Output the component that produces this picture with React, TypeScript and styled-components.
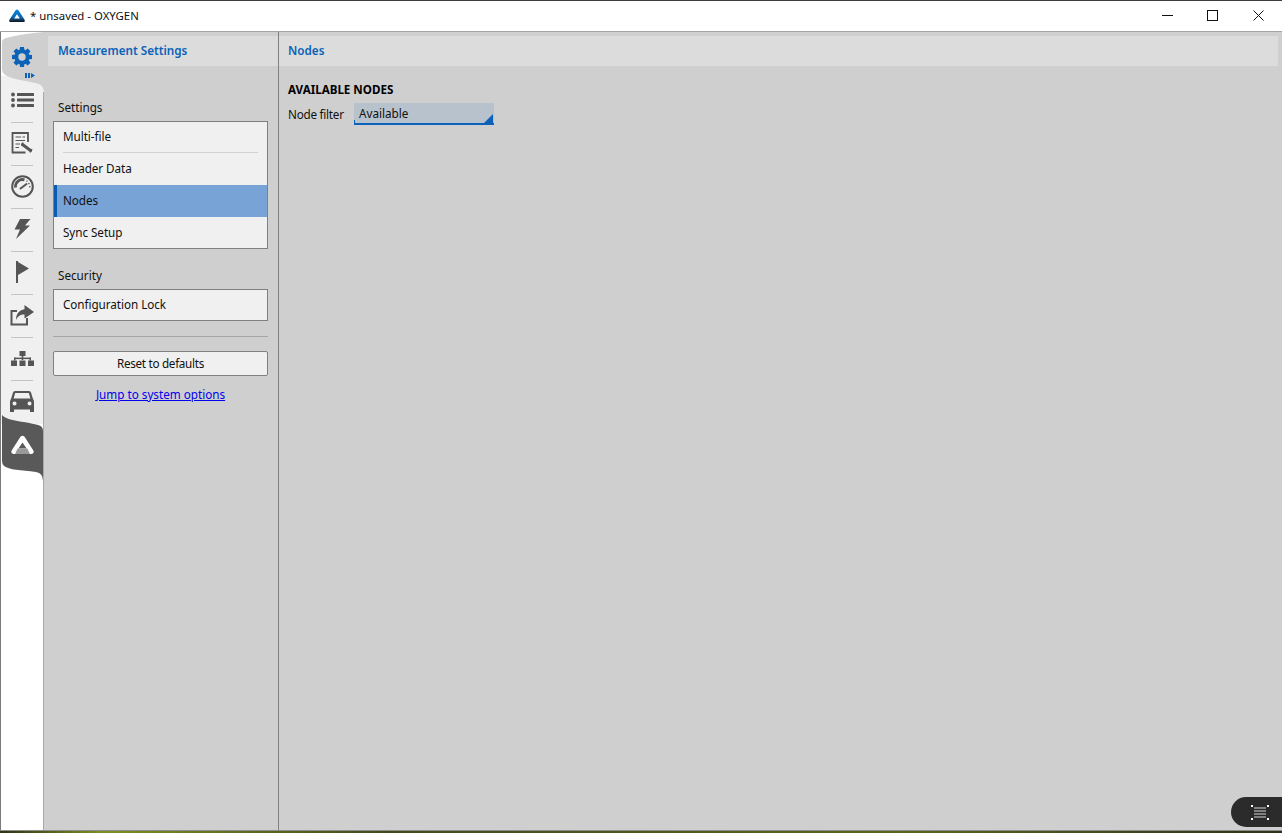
import React from "react";
import styled, { createGlobalStyle } from "styled-components";

const Global = createGlobalStyle`
  html, body { margin: 0; padding: 0; height: 100%; }
  body {
    background: linear-gradient(90deg, #2c3318 0%, #7d8f22 8%, #3f4a1c 30%, #59661f 70%, #2c3318 100%);
    font-family: "Noto Sans", "Open Sans", sans-serif;
    font-size: 11.7px;
    color: #111;
    overflow: hidden;
  }
  * { box-sizing: border-box; }
`;

const Window = styled.div`
  width: 1282px;
  height: 831px;
  display: flex;
  flex-direction: column;
  background: #fff;
  border-top: 1px solid #3c3c3c;
  border-bottom: 1px solid #8c8c8c;
  position: relative;
`;

const TitleBar = styled.header`
  height: 31px;
  flex: none;
  display: flex;
  align-items: center;
  padding: 0 1px 1px 9px;
  background: #fff;
  border-bottom: 1px solid #a4a4a4;
`;

const TitleText = styled.span`
  margin-left: 5px;
  font-size: 11.4px;
  color: #111;
`;

const WinControls = styled.div`
  margin-left: auto;
  display: flex;
`;

const WinButton = styled.div`
  width: 45.5px;
  height: 30px;
  display: flex;
  align-items: center;
  justify-content: center;
`;

const Body = styled.div`
  flex: 1;
  display: flex;
  min-height: 0;
  border-left: 1px solid #7a7a7a;
`;

const Rail = styled.nav`
  width: 42px;
  flex: none;
  display: flex;
  flex-direction: column;
  background: #fff;
  position: relative;
  z-index: 1;
`;

const ActiveTab = styled.div`
  height: 48px;
  flex: none;
  position: relative;
  display: flex;
  justify-content: center;
  padding-top: 15px;
  z-index: 1;
`;

const TabShape = styled.svg<{ $top: number }>`
  position: absolute;
  left: 0;
  top: ${(p) => p.$top}px;
  z-index: -1;
`;

const RailList = styled.div`
  display: flex;
  flex-direction: column;
  background: #f0f0f0;
`;

const RailItem = styled.div<{ $last?: boolean }>`
  height: 43px;
  display: flex;
  align-items: center;
  justify-content: center;
  padding-bottom: 3px;
  position: relative;
  &::after {
    content: "";
    display: ${(p) => (p.$last ? "none" : "block")};
    position: absolute;
    left: 10px;
    right: 10px;
    bottom: 0;
    height: 1px;
    background: #c4c4c4;
  }
`;

const LogoTab = styled.div`
  height: 56px;
  flex: none;
  position: relative;
  display: flex;
  justify-content: center;
  padding-top: 11px;
  z-index: 1;
`;

const RailRest = styled.div`
  flex: 1;
  background: #fff;
`;

const Main = styled.main`
  flex: 1;
  display: flex;
  background: #cfcfcf;
  border-left: 1px solid #a8a8a8;
`;

const SidePanel = styled.section`
  width: 235px;
  flex: none;
  border-right: 1px solid #808080;
  padding-top: 4px;
`;

const ContentPanel = styled.section`
  flex: 1;
  padding: 4px 4px 0 0;
`;

const PanelHeader = styled.div<{ $inset: number; $gutter: number }>`
  height: 30px;
  background: #dcdcdc;
  color: #0b62b8;
  font-weight: 600;
  line-height: 29px;
  padding-left: ${(p) => p.$inset}px;
  margin-left: ${(p) => p.$gutter}px;
`;

const SideBody = styled.div`
  padding: 33px 10px 0 9px;
`;

const GroupLabel = styled.div`
  line-height: 17px;
  padding-left: 5px;
  margin-bottom: 5px;
  color: #111;
`;

const Group = styled.div`
  border: 1px solid #808080;
  background: #f0f0f0;
  margin-bottom: 18px;
  display: flex;
  flex-direction: column;
`;

const GroupRow = styled.div<{ $active?: boolean; $rule?: boolean }>`
  height: 32px;
  line-height: 30px;
  padding-left: ${(p) => (p.$active ? 6 : 9)}px;
  background: ${(p) => (p.$active ? "#78a3d6" : "transparent")};
  border-left: ${(p) => (p.$active ? "3px solid #0b5cb0" : "none")};
  position: relative;
  color: #111;
  letter-spacing: -0.05px;
  &:first-child { height: 31px; line-height: 28px; }
  &:last-child { height: 31px; }
  &:only-child { height: 30px; line-height: 28px; }
  &::after {
    content: "";
    display: ${(p) => (p.$rule ? "block" : "none")};
    position: absolute;
    left: 9px;
    right: 9px;
    bottom: 0;
    height: 1px;
    background: #d2d2d2;
  }
`;

const Divider = styled.hr`
  border: 0;
  height: 1px;
  background: #a6a6a6;
  margin: -3px 0 14px;
`;

const ResetButton = styled.button`
  display: block;
  width: 100%;
  height: 25px;
  border: 1px solid #808080;
  border-radius: 2px;
  background: #f0f0f0;
  font: inherit;
  letter-spacing: -0.3px;
  color: #111;
  padding: 0 0 2px;
`;

const JumpLink = styled.a`
  display: block;
  margin-top: 10px;
  text-align: center;
  color: #0000ee;
  text-decoration: underline;
  line-height: 17px;
`;

const ContentBody = styled.div`
  padding: 15px 9px 0;
`;

const SectionTitle = styled.div`
  font-weight: 700;
  font-size: 11.6px;
  line-height: 17px;
  color: #000;
`;

const FilterRow = styled.div`
  display: flex;
  align-items: center;
  margin-top: 5px;
`;

const FilterLabel = styled.span`
  width: 66px;
  flex: none;
  letter-spacing: -0.25px;
`;

const Select = styled.div`
  width: 140px;
  height: 22px;
  background: #b8c2cd;
  border-bottom: 2px solid #0b62b8;
  padding-left: 5px;
  line-height: 21px;
  position: relative;
  color: #111;
  &::before {
    content: "";
    position: absolute;
    left: 0;
    bottom: 0;
    width: 1px;
    height: 3px;
    background: #0b62b8;
  }
  &::after {
    content: "";
    position: absolute;
    right: 1px;
    bottom: 0;
    border-style: solid;
    border-width: 0 0 9px 9px;
    border-color: transparent transparent #0b62b8 transparent;
  }
`;

const QueuePill = styled.div`
  position: absolute;
  right: 0;
  bottom: 3px;
  width: 51px;
  height: 30px;
  background: #2b2b2b;
  border-radius: 15px 0 0 15px;
  display: flex;
  align-items: center;
  justify-content: center;
  padding-left: 6px;
`;

const Logo = ({ size, light }: { size: number; light?: boolean }) => (
  <svg width={size} height={size * 0.86} viewBox="0 0 28 24">
    <defs>
      <linearGradient id="lg" x1="0" y1="0" x2="0" y2="1">
        <stop offset="0" stopColor="#0a86dc" />
        <stop offset="0.6" stopColor="#0a6ab8" />
        <stop offset="0.85" stopColor="#12324e" />
        <stop offset="1" stopColor="#111" />
      </linearGradient>
    </defs>
    <path
      fillRule="evenodd"
      fill={light ? "#fff" : "url(#lg)"}
      d="M11.5 2 Q14 0 16.5 2 L27 18.5 Q29 22.5 25 23 L3 23 Q-1 22.5 1 18.5 Z M14 9 L9 16.5 L19 16.5 Z"
    />
    {light && <path d="M8 16.5 H20 L23 23 H5 Z" fill="#9a9a9a" />}
  </svg>
);

const GearIcon = () => (
  <svg width="20" height="20" viewBox="0 0 20 20">
    <g fill="#0b62b8">
      {[0, 45, 90, 135, 180, 225, 270, 315].map((a) => (
        <path key={a} d="M8 0 H12 L12.6 4 H7.4 Z" transform={`rotate(${a} 10 10)`} />
      ))}
    </g>
    <circle cx="10" cy="10" r="5.6" fill="none" stroke="#0b62b8" strokeWidth="3.8" />
  </svg>
);

const ListIcon = () => (
  <svg width="23" height="16" viewBox="0 0 23 16" fill="#555">
    <circle cx="2" cy="2.5" r="1.9" />
    <circle cx="2" cy="8" r="1.9" />
    <circle cx="2" cy="13.5" r="1.9" />
    <rect x="6" y="1" width="17" height="3" rx="0.5" />
    <rect x="6" y="6.5" width="17" height="3" rx="0.5" />
    <rect x="6" y="12" width="17" height="3" rx="0.5" />
  </svg>
);

const ReportIcon = () => (
  <svg width="23" height="22" viewBox="0 0 23 22" fill="none" stroke="#555">
    <path d="M14.5 20.5 H1.5 V1 H17 V10" strokeWidth="1.8" />
    <path d="M4.5 5 H10 M11.5 5 H14 M4.5 8.5 H14 M4.5 12 H9 M4.5 15.5 H8" strokeWidth="1.2" />
    <path d="M11.5 12.5 L19.5 18.5" strokeWidth="3" strokeLinecap="round" />
    <path d="M10.5 13.5 L12 10.5 M21 17 L19 20.5" strokeWidth="1.4" />
  </svg>
);

const GaugeIcon = () => (
  <svg width="23" height="23" viewBox="0 0 23 23" fill="none" stroke="#555">
    <circle cx="11.5" cy="11.5" r="10.3" strokeWidth="2" />
    <path d="M4.6 12.5 A7 7 0 0 1 13.5 4.8" strokeWidth="2.8" />
    <path d="M15.6 5.8 L16.4 6.6 M17.6 8 L18.3 9.2 M18.7 11 L19 12.4" strokeWidth="1.4" />
    <path d="M9.5 13.5 L15.5 9" strokeWidth="2" strokeLinecap="round" />
  </svg>
);

const BoltIcon = () => (
  <svg width="17" height="20" viewBox="0 0 17 20" fill="#555">
    <path d="M6 0 H16.5 L11 6.5 H16 L2 20 L6 10.5 H0.5 Z" />
  </svg>
);

const FlagIcon = () => (
  <svg width="13" height="22" viewBox="0 0 13 22" fill="#555">
    <rect x="0" y="0" width="2" height="22" />
    <path d="M2 1 L13 7.5 L2 14 Z" />
  </svg>
);

const ShareIcon = () => (
  <svg width="24" height="21" viewBox="0 0 24 21">
    <path d="M7 6 H1.5 V19.5 H17 V13" fill="none" stroke="#555" strokeWidth="2" />
    <path fill="#555" d="M14.5 0 L24 7 L14.5 13.5 V9.5 C10 9.5 7.5 11.5 6 15 C6 9 9 5 14.5 4.2 Z" />
  </svg>
);

const TreeIcon = () => (
  <svg width="23" height="15" viewBox="0 0 23 15" fill="#555">
    <rect x="8.5" y="0" width="6" height="5" />
    <rect x="10.7" y="5" width="1.6" height="4" />
    <rect x="3" y="6.6" width="17" height="1.5" />
    <rect x="3" y="6.6" width="1.5" height="3" />
    <rect x="18.5" y="6.6" width="1.5" height="3" />
    <rect x="0" y="9.5" width="6" height="5.5" />
    <rect x="8.5" y="9.5" width="6" height="5.5" />
    <rect x="17" y="9.5" width="6" height="5.5" />
  </svg>
);

const CarIcon = () => (
  <svg width="24" height="21" viewBox="0 0 24 21">
    <path
      fill="#555"
      fillRule="evenodd"
      d="M5 0 H19 Q20.5 0 21 1.5 L23 8 Q24 9 24 11 V21 H20 V18.5 H4 V21 H0 V11 Q0 9 1 8 L3 1.5 Q3.5 0 5 0 Z M5.2 2 L3.6 7.5 H20.4 L18.8 2 Z M4.5 10.5 A2 2 0 1 0 4.6 14.5 A2 2 0 1 0 4.5 10.5 Z M19.5 10.5 A2 2 0 1 0 19.6 14.5 A2 2 0 1 0 19.5 10.5 Z"
    />
  </svg>
);

const QueueIcon = () => (
  <svg width="18" height="15" viewBox="0 0 18 15">
    <g fill="#fff">
      <rect x="0" y="0" width="2" height="2" />
      <rect x="16" y="0" width="2" height="2" />
      <rect x="0" y="13" width="2" height="2" />
      <rect x="16" y="13" width="2" height="2" />
    </g>
    <path d="M3 3 H15 M3 6 H15 M3 9 H15 M3 12 H15" stroke="#d8d8d8" strokeWidth="1.2" />
  </svg>
);

export default function App() {
  return (
    <>
      <Global />
      <Window>
        <TitleBar>
          <Logo size={16} />
          <TitleText>* unsaved - OXYGEN</TitleText>
          <WinControls>
            <WinButton>
              <svg width="11" height="11"><path d="M0 5.5 H11" stroke="#111" /></svg>
            </WinButton>
            <WinButton>
              <svg width="11" height="11"><rect x="0.5" y="0.5" width="10" height="10" fill="none" stroke="#111" /></svg>
            </WinButton>
            <WinButton>
              <svg width="11" height="11"><path d="M0.5 0.5 L10.5 10.5 M10.5 0.5 L0.5 10.5" stroke="#111" /></svg>
            </WinButton>
          </WinControls>
        </TitleBar>
        <Body>
          <Rail>
            <ActiveTab>
              <TabShape $top={0} width="43" height="60" viewBox="0 0 43 60">
                <path d="M0 44 H43 V60 H0 Z" fill="#f0f0f0" />
                <path
                  d="M1 10 Q1 7 5 6 Q22 1.5 43 0 V60 Q43 52 34 51 C22 48 8 47 3 42 Q1 40 1 37 Z"
                  fill="#cfcfcf"
                />
                <path d="M24 41 h2 v5 h-2z M27 41 h2 v5 h-2z M30 41 l4 2.5 l-4 2.5z" fill="#0b62b8" />
              </TabShape>
              <GearIcon />
            </ActiveTab>
            <RailList>
              <RailItem><ListIcon /></RailItem>
              <RailItem><ReportIcon /></RailItem>
              <RailItem><GaugeIcon /></RailItem>
              <RailItem><BoltIcon /></RailItem>
              <RailItem><FlagIcon /></RailItem>
              <RailItem><ShareIcon /></RailItem>
              <RailItem><TreeIcon /></RailItem>
              <RailItem $last><CarIcon /></RailItem>
            </RailList>
            <LogoTab>
              <TabShape $top={-9} width="42" height="66" viewBox="0 0 42 66">
                <path
                  d="M1 0 C6 6 22 6 37 10 Q42 11 42 16 V66 Q42 58 35 57 C20 55 8 55 3 51 Q1 49 1 46 Z"
                  fill="#595959"
                />
              </TabShape>
              <Logo size={23} light />
            </LogoTab>
            <RailRest />
          </Rail>
          <Main>
            <SidePanel>
              <PanelHeader $inset={10} $gutter={4}>Measurement Settings</PanelHeader>
              <SideBody>
                <GroupLabel>Settings</GroupLabel>
                <Group>
                  <GroupRow $rule>Multi-file</GroupRow>
                  <GroupRow>Header Data</GroupRow>
                  <GroupRow $active>Nodes</GroupRow>
                  <GroupRow>Sync Setup</GroupRow>
                </Group>
                <GroupLabel>Security</GroupLabel>
                <Group>
                  <GroupRow>Configuration Lock</GroupRow>
                </Group>
                <Divider />
                <ResetButton>Reset to defaults</ResetButton>
                <JumpLink href="#">Jump to system options</JumpLink>
              </SideBody>
            </SidePanel>
            <ContentPanel>
              <PanelHeader $inset={9} $gutter={0}>Nodes</PanelHeader>
              <ContentBody>
                <SectionTitle>AVAILABLE NODES</SectionTitle>
                <FilterRow>
                  <FilterLabel>Node filter</FilterLabel>
                  <Select>Available</Select>
                </FilterRow>
              </ContentBody>
            </ContentPanel>
          </Main>
        </Body>
        <QueuePill><QueueIcon /></QueuePill>
      </Window>
    </>
  );
}
